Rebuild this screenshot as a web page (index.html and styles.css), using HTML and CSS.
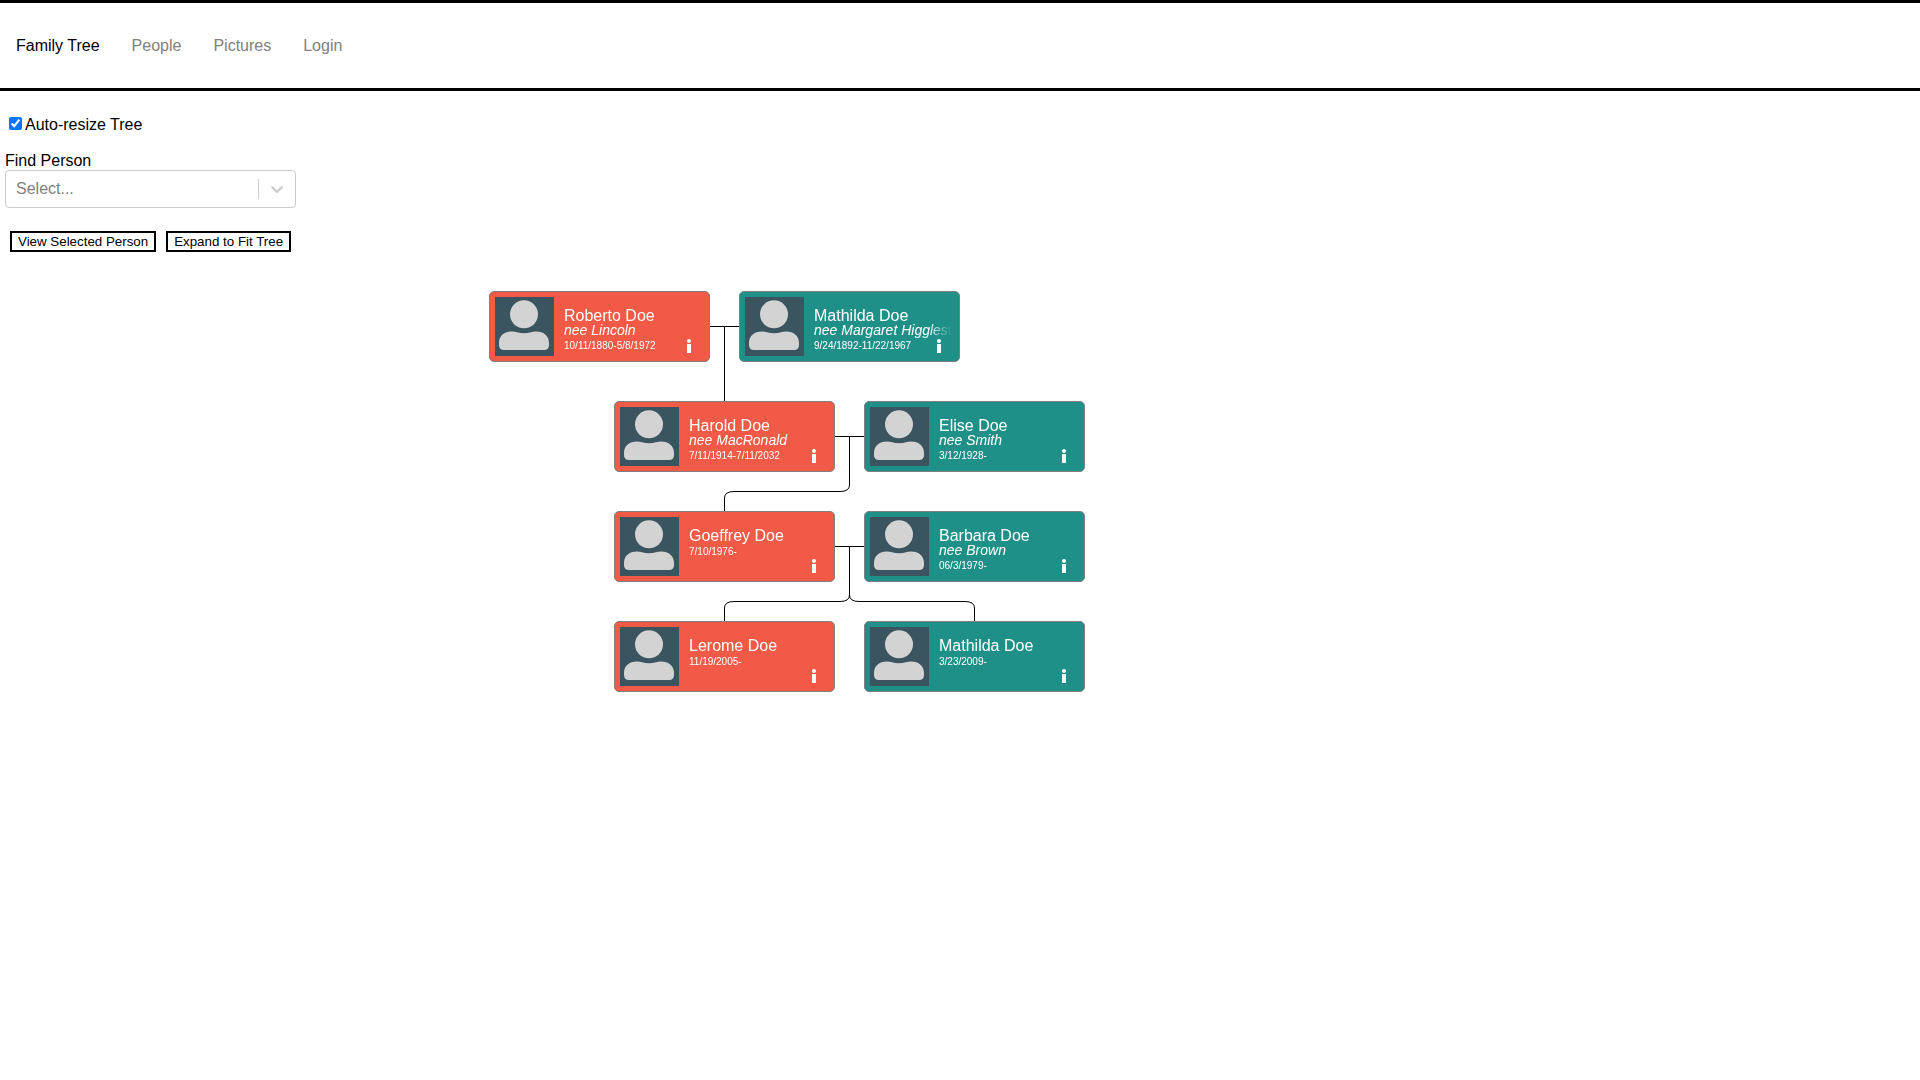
FILE: index.html
```html
<!DOCTYPE html>
<html lang="en">
<head>
  <meta charset="UTF-8">
  <meta name="viewport" content="width=device-width, initial-scale=1">
  <title>Family Tree</title>
  <link rel="stylesheet" href="styles.css">
</head>
<body>
<nav class="navbar">
  <a class="active" href="#">Family Tree</a>
  <a href="#">People</a>
  <a href="#">Pictures</a>
  <a href="#">Login</a>
</nav>

<div class="controls">
  <div class="resize">
    <input type="checkbox" id="resize" checked><label for="resize">Auto-resize Tree</label>
  </div>
  <label for="person">Find Person</label>
  <div class="select">
    <select id="person">
      <option value="">Select...</option>
    </select>
    <div class="indicator">
      <svg width="20" height="20" viewBox="0 0 20 20"><path d="M4.516 7.548c0.436-0.446 1.043-0.481 1.576 0l3.908 3.747 3.908-3.747c0.533-0.481 1.141-0.446 1.574 0 0.436 0.445 0.408 1.197 0 1.615-0.406 0.418-4.695 4.502-4.695 4.502-0.217 0.223-0.502 0.335-0.787 0.335s-0.57-0.112-0.789-0.335c0 0-4.287-4.084-4.695-4.502s-0.436-1.17 0-1.615z"/></svg>
    </div>
  </div>
  <div class="buttons">
    <button type="button">View Selected Person</button>
    <button type="button">Expand to Fit Tree</button>
  </div>
</div>

<div class="tree" id="tree">
  <svg class="links" width="600" height="401">
    <path d="M221 35.5H251M235.5 35V110"/>
    <path d="M346 145.5H376M360.5 145V194Q360.5 200.5 351 200.5H245Q235.5 200.5 235.5 207V220"/>
    <path d="M346 255.5H376M360.5 255V304Q360.5 310.5 351 310.5H245Q235.5 310.5 235.5 317V330"/>
    <path d="M360.5 304Q360.5 310.5 370 310.5H476Q485.5 310.5 485.5 317V330"/>
  </svg>
</div>

<script>
  const generations = [
    [
      { name: 'Roberto Doe', nee: 'Lincoln', dates: '10/11/1880-5/8/1972', sex: 'male' },
      { name: 'Mathilda Doe', nee: 'Margaret Higglesworth', dates: '9/24/1892-11/22/1967', sex: 'female' }
    ],
    [
      { name: 'Harold Doe', nee: 'MacRonald', dates: '7/11/1914-7/11/2032', sex: 'male' },
      { name: 'Elise Doe', nee: 'Smith', dates: '3/12/1928-', sex: 'female' }
    ],
    [
      { name: 'Goeffrey Doe', dates: '7/10/1976-', sex: 'male' },
      { name: 'Barbara Doe', nee: 'Brown', dates: '06/3/1979-', sex: 'female' }
    ],
    [
      { name: 'Lerome Doe', dates: '11/19/2005-', sex: 'male' },
      { name: 'Mathilda Doe', dates: '3/23/2009-', sex: 'female' }
    ]
  ];

  const photo = `<svg class="photo" viewBox="0 0 59 59">
    <circle cx="29" cy="17.300" r="14"/>
    <path d="M4 46C4 39 9 34.500 17 34.500Q20 34.500 22 35.300Q29 37.300 36 35.300Q38 34.500 41 34.500C49 34.500 54 39 54 46V48Q54 53 49 53H9Q4 53 4 48Z"/>
  </svg>`;

  const info = `<svg class="info" width="4" height="14" viewBox="0 0 4 14">
    <circle cx="2" cy="2" r="2"/><rect y="5" width="4" height="9"/>
  </svg>`;

  const tree = document.getElementById('tree');
  generations.forEach(people => {
    const row = document.createElement('div');
    row.className = 'generation';
    row.innerHTML = people.map(p => `
      <div class="card ${p.sex}">
        ${photo}
        <div class="details">
          <div class="name">${p.name}</div>
          ${p.nee ? `<div class="nee">nee ${p.nee}</div>` : ''}
          <div class="dates">${p.dates}</div>
        </div>
        ${info}
      </div>`).join('');
    tree.appendChild(row);
  });
</script>
</body>
</html>
```
FILE: styles.css
```css
body {
  margin: 0;
  font-family: "Liberation Sans", Arial, sans-serif;
  font-size: 16px;
  line-height: 18px;
  color: #000;
  background: #fff;
}
.navbar {
  display: flex;
  align-items: center;
  gap: 32px;
  padding: 34px 16px 33px;
  border-top: 3px solid #000;
  border-bottom: 3px solid #000;
}
.navbar a {
  color: #808080;
  text-decoration: none;
}
.navbar a.active {
  color: #000;
}
.controls {
  padding: 23px 5px 0;
}
.resize {
  margin-bottom: 18px;
}
.resize input {
  margin: 3px 3px 3px 4px;
}
.select {
  position: relative;
  width: 291px;
}
.select select {
  display: block;
  appearance: none;
  width: 100%;
  height: 38px;
  padding: 0 50px 2px 10px;
  border: 1px solid #ccc;
  border-radius: 4px;
  background: #fff;
  color: #808080;
  font-family: inherit;
  font-size: 16px;
}
.indicator {
  position: absolute;
  top: 9px;
  right: 1px;
  display: flex;
  padding: 0 8px;
  border-left: 1px solid #ccc;
  pointer-events: none;
}
.indicator svg {
  fill: #ccc;
}
.buttons {
  display: flex;
  gap: 10px;
  padding: 23px 5px 0;
}
.buttons button {
  padding: 1px 6px;
  border: 2px solid #000;
  background: #fff;
  color: #000;
}
.tree {
  position: relative;
  display: flex;
  flex-direction: column;
  gap: 39px;
  margin: 39px 0 0 489px;
}
.links {
  position: absolute;
  top: 0;
  left: 0;
  fill: none;
  stroke: #000;
}
.generation {
  display: flex;
  gap: 29px;
  margin-left: 125px;
}
.links + .generation {
  margin-left: 0;
}
.card {
  position: relative;
  display: flex;
  box-sizing: border-box;
  width: 221px;
  height: 71px;
  padding: 5px;
  border: 1px solid #808080;
  border-radius: 5px;
  color: #fff;
}
.male {
  background: #f05a46;
}
.female {
  background: #1f9088;
}
.photo {
  flex: none;
  width: 59px;
  height: 59px;
  background: #3b5560;
  fill: #d3d3d3;
}
.details {
  flex: 1;
  overflow: hidden;
  margin-right: 4px;
  padding: 11px 0 0 10px;
  white-space: nowrap;
  mask-image: linear-gradient(to right, #000 124px, transparent 148px);
}
.name {
  line-height: 16px;
}
.nee {
  font-size: 14px;
  font-style: italic;
  line-height: 12px;
}
.dates {
  font-size: 10px;
  line-height: 16px;
}
.nee + .dates {
  line-height: 20px;
}
.info {
  position: absolute;
  right: 18px;
  bottom: 8px;
  fill: #fff;
}
```
